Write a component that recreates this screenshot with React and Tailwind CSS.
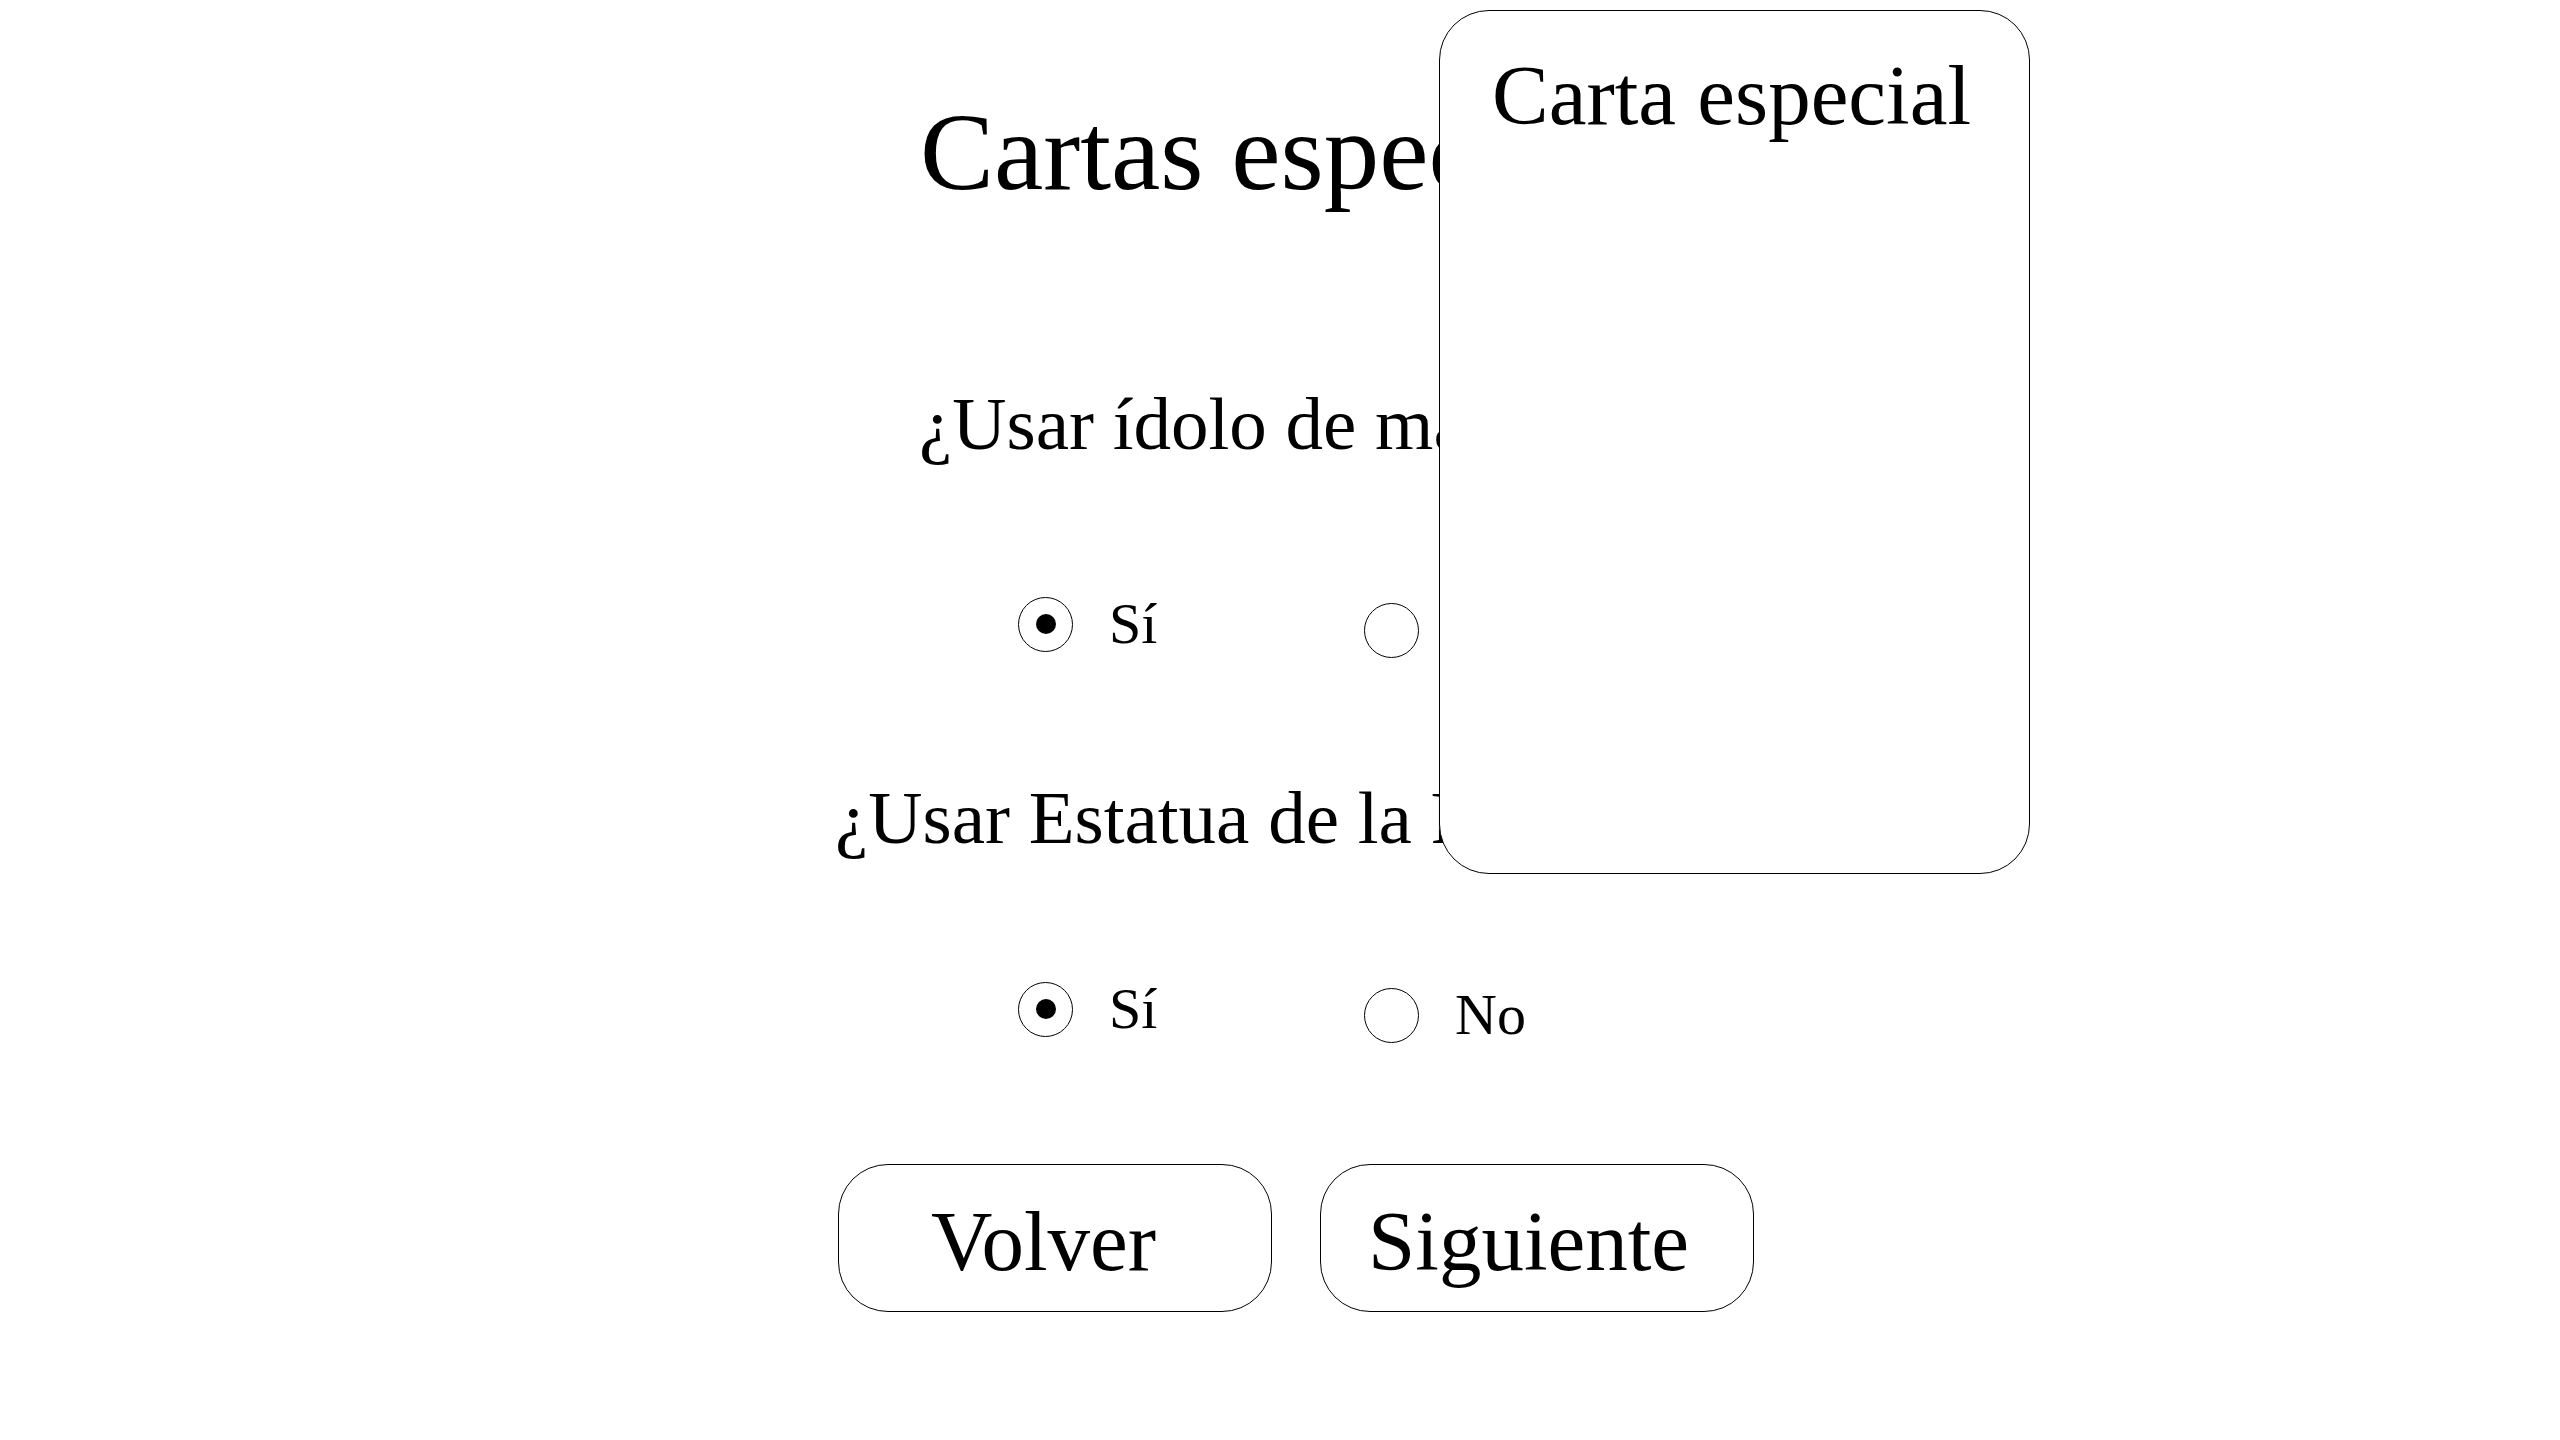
import { useState } from 'react';

function Option({ name, label, checked, onChange, className = '' }) {
  return (
    <label className={`flex h-14 w-fit items-center gap-9 text-[58px] leading-[56px] ${className}`}>
      <input
        type="radio"
        name={name}
        checked={checked}
        onChange={onChange}
        className="grid size-[55px] shrink-0 appearance-none place-content-center rounded-full border border-black before:size-5 before:rounded-full before:bg-black before:opacity-0 checked:before:opacity-100"
      />
      {label}
    </label>
  );
}

function Choice({ name, legend, className = '' }) {
  const [value, setValue] = useState('si');
  return (
    <div
      role="radiogroup"
      aria-label={legend}
      className={`grid grid-cols-[346px_auto] items-start pl-[180px] ${className}`}
    >
      <Option name={name} label="Sí" checked={value === 'si'} onChange={() => setValue('si')} />
      <Option
        name={name}
        label="No"
        checked={value === 'no'}
        onChange={() => setValue('no')}
        className="mt-1.5"
      />
    </div>
  );
}

const idol = '¿Usar ídolo de madera?';
const statue = '¿Usar Estatua de la Fortuna?';

export default function App() {
  return (
    <main className="flex min-h-screen justify-center bg-white pl-8 font-['Liberation_Serif',serif] text-black">
      <form
        className="relative w-full max-w-[916px] whitespace-nowrap pt-[88px]"
        onSubmit={(e) => e.preventDefault()}
      >
        <h1 className="pl-[82px] text-[111px] leading-[128px]">Cartas especiales</h1>

        <h2 className="mt-[168px] pl-[81px] text-[75px] leading-[80px]">{idol}</h2>
        <Choice name="idolo" legend={idol} className="mt-[132px]" />

        <h2 className="-ml-[3px] mt-[120px] text-[75px] leading-[80px]">{statue}</h2>
        <Choice name="estatua" legend={statue} className="mt-[123px]" />

        <div className="mt-[121px] grid grid-cols-2 gap-12 text-[85px] leading-[96px]">
          <button
            type="button"
            className="h-[148px] rounded-[50px] border border-black pl-[92px] pt-1.5 text-left"
          >
            Volver
          </button>
          <button
            type="submit"
            className="h-[148px] rounded-[50px] border border-black pl-[47px] pt-1.5 text-left"
          >
            Siguiente
          </button>
        </div>

        <aside className="absolute left-[601px] top-2.5 h-[864px] w-[591px] rounded-[50px] border border-black bg-white pl-[52px] pt-9">
          <h2 className="text-[85px] leading-[96px]">Carta especial</h2>
        </aside>
      </form>
    </main>
  );
}
